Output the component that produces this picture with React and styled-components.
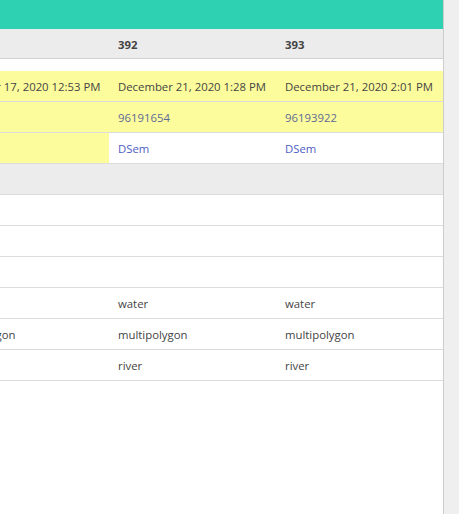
import React from "react";
import styled, { createGlobalStyle } from "styled-components";

const GlobalStyles = createGlobalStyle`
  html, body {
    margin: 0;
    padding: 0;
    background: #ffffff;
  }
  body {
    font-family: "Open Sans", "Noto Sans", sans-serif;
    font-size: 11.35px;
    color: #444444;
  }
`;

const columns = [
  {
    id: "391",
    date: "December 17, 2020 12:53 PM",
    changeset: "",
    user: "",
    old: true,
    tags: ["", "", "", "", "multipolygon", ""]
  },
  {
    id: "392",
    date: "December 21, 2020 1:28 PM",
    changeset: "96191654",
    user: "DSem",
    tags: ["", "", "", "water", "multipolygon", "river"]
  },
  {
    id: "393",
    date: "December 21, 2020 2:01 PM",
    changeset: "96193922",
    user: "DSem",
    tags: ["", "", "", "water", "multipolygon", "river"]
  }
];

const Page = styled.div`
  display: flex;
  height: 514px;
  width: 459px;
  overflow: hidden;
`;

const Main = styled.div`
  flex: 1;
  display: flex;
  flex-direction: column;
  min-width: 0;
`;

const TopBar = styled.div`
  height: 29px;
  background: #2ed1b1;
  flex-shrink: 0;
`;

/* the history table is scrolled to its newest versions, so it hugs the right edge */
const Viewport = styled.div`
  display: flex;
  justify-content: flex-end;
  overflow: hidden;
`;

const Table = styled.div`
  display: flex;
  flex-direction: column;
  flex-shrink: 0;
`;

const Row = styled.div`
  display: grid;
  grid-template-columns: 172px 167px 167px;
  height: ${p => p.$h || 30}px;
  border-bottom: 1px solid ${p => (p.$head ? "#d2d2d2" : "#dcdcdc")};
  background: ${p => (p.$tone === "gray" ? "#ececec" : "transparent")};
`;

const Spacer = styled.div`
  height: 12px;
`;

const Cell = styled.div`
  display: flex;
  align-items: center;
  padding-left: 9px;
  padding-top: 1px;
  white-space: nowrap;
  background: ${p => (p.$yellow ? "#fcfc9c" : "transparent")};
  color: ${p =>
    p.$kind === "link" ? "#4d60c4" : p.$kind === "num" ? "#5e6a96" : "#444444"};
  font-weight: ${p => (p.$bold ? 700 : 400)};
`;

const ScrollTrack = styled.div`
  width: 15px;
  flex-shrink: 0;
  background: #efefef;
  border-left: 1px solid #cdcdcd;
`;

export default function App() {
  return (
    <>
      <GlobalStyles />
      <Page>
        <Main>
          <TopBar />
          <Viewport>
            <Table>
              <Row $head $tone="gray" $h={29}>
                {columns.map(c => (
                  <Cell key={c.id} $bold>
                    {c.old ? "" : c.id}
                  </Cell>
                ))}
              </Row>
              <Spacer />
              <Row>
                {columns.map(c => (
                  <Cell key={c.id} $yellow>
                    {c.date}
                  </Cell>
                ))}
              </Row>
              <Row>
                {columns.map(c => (
                  <Cell key={c.id} $yellow $kind="num">
                    {c.changeset}
                  </Cell>
                ))}
              </Row>
              <Row>
                {columns.map(c => (
                  <Cell key={c.id} $yellow={c.old} $kind="link">
                    {c.user}
                  </Cell>
                ))}
              </Row>
              <Row $tone="gray">
                {columns.map(c => (
                  <Cell key={c.id} />
                ))}
              </Row>
              {[0, 1, 2, 3, 4, 5].map(i => (
                <Row key={i}>
                  {columns.map(c => (
                    <Cell key={c.id}>{c.tags[i]}</Cell>
                  ))}
                </Row>
              ))}
            </Table>
          </Viewport>
        </Main>
        <ScrollTrack />
      </Page>
    </>
  );
}
